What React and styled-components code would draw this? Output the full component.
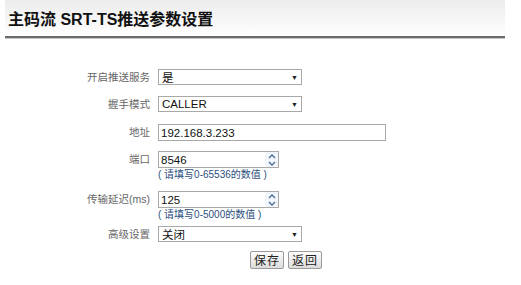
import React from "react";
import styled, { createGlobalStyle } from "styled-components";

const GlobalStyle = createGlobalStyle`
  html, body {
    margin: 0;
    padding: 0;
    background: #ffffff;
  }
  body {
    font-family: "Liberation Sans", Arial, "Noto Sans CJK SC", sans-serif;
    font-size: 12px;
    color: #333;
  }
`;

const Page = styled.div`
  width: 521px;
  height: 285px;
  overflow: hidden;
`;

const Header = styled.div`
  height: 36px;
  margin: 0 16px 0 5px;
  padding-left: 3px;
  display: flex;
  align-items: center;
  background: linear-gradient(#ececec, #ffffff);
  border-bottom: 2px solid #6b6b6b;
  box-shadow: 0 1px 0 #c8c8c8;
  h2 {
    margin: 0;
    font-size: 16px;
    font-weight: bold;
    color: #111;
    font-family: "Liberation Sans", Arial, "Noto Sans CJK SC", sans-serif;
  }
`;

const Form = styled.div`
  display: grid;
  grid-template-columns: 150px auto;
  grid-template-rows: 27px 28px 27px 40px 35px 25px auto;
  column-gap: 8px;
  padding-top: 31px;
  align-items: start;
`;

const Label = styled.div`
  text-align: right;
  color: #666;
  font-size: 10.5px;
  line-height: 16px;
  font-family: "Liberation Sans", Arial, "Noto Sans CJK SC", sans-serif;
`;

const Field = styled.div`
  display: flex;
  flex-direction: column;
`;

const Select = styled.div`
  width: 144px;
  height: 16px;
  box-sizing: border-box;
  border: 1px solid #a9a9a9;
  background: #fff;
  display: flex;
  align-items: center;
  justify-content: space-between;
  padding: 0 3px 0 3px;
  font-size: 11.5px;
  color: #111;
  span.arrow {
    font-size: 7px;
    color: #222;
  }
`;

const TextInput = styled.div`
  width: ${(p) => p.$w || 228}px;
  height: 17px;
  box-sizing: border-box;
  border: 1px solid #a9a9a9;
  background: #fff;
  display: flex;
  align-items: center;
  justify-content: space-between;
  padding-left: 2px;
  font-size: 11.5px;
  color: #111;
`;

const Spinner = styled.div`
  width: 13px;
  height: 15px;
  display: flex;
  flex-direction: column;
  align-items: center;
  justify-content: center;
  background: #f2f6fb;
  svg {
    display: block;
  }
`;

const Hint = styled.div`
  color: #2c4f7c;
  font-size: 10px;
  line-height: 13px;
  font-family: "Liberation Sans", Arial, "Noto Sans CJK SC", sans-serif;
`;

const Buttons = styled.div`
  grid-column: 2;
  display: flex;
  gap: 4px;
  padding-left: 92px;
`;

const Button = styled.button`
  height: 18px;
  padding: 0 3px;
  border: 1px solid #9a9a9a;
  border-radius: 2px;
  background: linear-gradient(#fdfdfd, #dcdcdc);
  font-size: 12px;
  color: #222;
  font-family: "Noto Sans CJK SC", sans-serif;
  line-height: 16px;
  letter-spacing: 1px;
`;

const Arrows = () => (
  <Spinner>
    <svg width="8" height="5" viewBox="0 0 8 5">
      <path d="M1 4 L4 1 L7 4" fill="none" stroke="#4a6a9a" strokeWidth="1.4" />
    </svg>
    <svg width="8" height="5" viewBox="0 0 8 5" style={{ marginTop: 2 }}>
      <path d="M1 1 L4 4 L7 1" fill="none" stroke="#4a6a9a" strokeWidth="1.4" />
    </svg>
  </Spinner>
);

const SelectBox = ({ value }) => (
  <Select>
    <span>{value}</span>
    <span className="arrow">▼</span>
  </Select>
);

const App = () => (
  <Page>
    <GlobalStyle />
    <Header>
      <h2>主码流 SRT-TS推送参数设置</h2>
    </Header>
    <Form>
      <Label>开启推送服务</Label>
      <SelectBox value="是" />

      <Label>握手模式</Label>
      <SelectBox value="CALLER" />

      <Label>地址</Label>
      <TextInput>192.168.3.233</TextInput>

      <Label>端口</Label>
      <Field>
        <TextInput $w={121}>
          <span>8546</span>
          <Arrows />
        </TextInput>
        <Hint>( 请填写0-65536的数值 )</Hint>
      </Field>

      <Label>传输延迟(ms)</Label>
      <Field>
        <TextInput $w={121}>
          <span>125</span>
          <Arrows />
        </TextInput>
        <Hint>( 请填写0-5000的数值 )</Hint>
      </Field>

      <Label>高级设置</Label>
      <SelectBox value="关闭" />

      <Buttons>
        <Button>保存</Button>
        <Button>返回</Button>
      </Buttons>
    </Form>
  </Page>
);

export default App;
